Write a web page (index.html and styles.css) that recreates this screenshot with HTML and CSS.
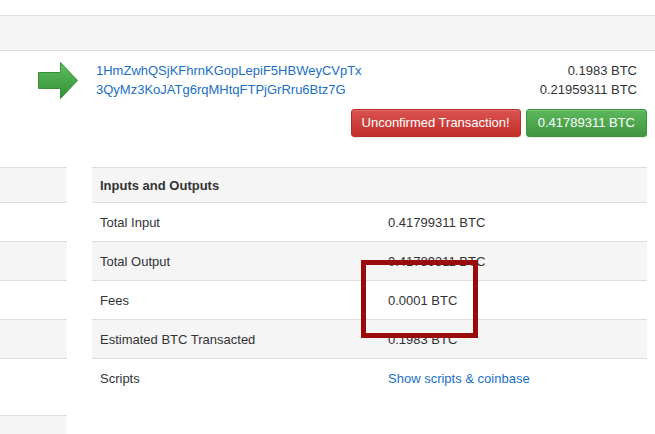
FILE: index.html
```html
<!DOCTYPE html>
<html>
<head>
<meta charset="utf-8">
<link rel="stylesheet" href="styles.css">
</head>
<body>
<div class="page">
  <div class="band"></div>

  <div class="tx">
    <div class="arrow">
      <svg width="40" height="37" viewBox="0 0 40 37">
        <defs>
          <linearGradient id="g" x1="0" y1="0" x2="0" y2="1">
            <stop offset="0" stop-color="#62bd62"/>
            <stop offset="1" stop-color="#2f9233"/>
          </linearGradient>
        </defs>
        <polygon points="0.5,10.5 22.5,10.5 22.5,0.5 39.5,18.5 22.5,36.5 22.5,26.5 0.5,26.5" fill="url(#g)" stroke="#3a8e3a" stroke-width="1"/>
      </svg>
    </div>
    <div class="addrs">
      <a class="link">1HmZwhQSjKFhrnKGopLepiF5HBWeyCVpTx</a>
      <a class="link">3QyMz3KoJATg6rqMHtqFTPjGrRru6Btz7G</a>
    </div>
    <div class="amounts">
      <span>0.1983 BTC</span>
      <span>0.21959311 BTC</span>
    </div>
  </div>

  <div class="buttons">
    <span class="btn btn-red">Unconfirmed Transaction!</span>
    <span class="btn btn-green">0.41789311 BTC</span>
  </div>

  <div class="lower">
    <div class="side">
      <div class="srow gray h35"></div>
      <div class="srow h39"></div>
      <div class="srow gray h39"></div>
      <div class="srow h39"></div>
      <div class="srow gray h39"></div>
      <div class="srow h57"></div>
      <div class="srow gray h40"></div>
    </div>
    <div class="table">
      <div class="trow head gray"><div class="cell"><b>Inputs and Outputs</b></div><div class="cell"></div></div>
      <div class="trow"><div class="cell">Total Input</div><div class="cell">0.41799311 BTC</div></div>
      <div class="trow gray"><div class="cell">Total Output</div><div class="cell">0.41789311 BTC</div></div>
      <div class="trow"><div class="cell">Fees</div><div class="cell">0.0001 BTC</div></div>
      <div class="trow gray"><div class="cell">Estimated BTC Transacted</div><div class="cell">0.1983 BTC</div></div>
      <div class="trow"><div class="cell">Scripts</div><div class="cell"><a class="link">Show scripts &amp; coinbase</a></div></div>
    </div>
  </div>

  <div class="highlight"></div>
</div>
</body>
</html>
```
FILE: styles.css
```css
html, body {
  margin: 0;
  padding: 0;
  background: #fff;
}
body {
  font-family: "Liberation Sans", Arial, sans-serif;
  font-size: 13px;
  color: #333;
  width: 655px;
  height: 434px;
  overflow: hidden;
}
.page {
  position: relative;
  padding-top: 15px;
  height: 419px;
}
.band {
  height: 34px;
  background: #f5f5f5;
  border-top: 1px solid #ddd;
  border-bottom: 1px solid #ddd;
}
.tx {
  display: flex;
  align-items: flex-start;
  margin-top: 10px;
  padding-right: 18px;
}
.arrow {
  width: 40px;
  margin-left: 38px;
  margin-top: 1px;
  height: 37px;
}
.arrow svg { display: block; }
.addrs {
  display: flex;
  flex-direction: column;
  margin-left: 18px;
  line-height: 19px;
  flex: 1;
}
.link {
  color: #1a6fc4;
  text-decoration: none;
}
.amounts {
  display: flex;
  flex-direction: column;
  align-items: flex-end;
  line-height: 19px;
}
.buttons {
  display: flex;
  justify-content: flex-end;
  gap: 5px;
  margin-top: 10px;
  padding-right: 8px;
}
.btn {
  display: inline-block;
  height: 26px;
  line-height: 26px;
  color: #fff;
  border-radius: 3px;
  padding: 0 10px;
  white-space: nowrap;
  box-shadow: inset 0 1px 0 rgba(255,255,255,0.15), 0 1px 1px rgba(0,0,0,0.08);
}
.btn-red {
  background: linear-gradient(#d9534f, #c12e2a);
  border: 1px solid #b92c28;
}
.btn-green {
  background: linear-gradient(#5cb85c, #419641);
  border: 1px solid #3e8f3e;
  padding: 0 11px;
}
.lower {
  display: flex;
  gap: 25px;
  margin-top: 30px;
}
.side {
  width: 67px;
  display: flex;
  flex-direction: column;
}
.srow {
  border-top: 1px solid #ddd;
  box-sizing: border-box;
}
.gray { background: #f5f5f5; }
.h35 { height: 35px; }
.h39 { height: 39px; }
.h57 { height: 57px; }
.h40 { height: 40px; }
.table {
  width: 555px;
  display: flex;
  flex-direction: column;
}
.trow {
  display: grid;
  grid-template-columns: 296px 1fr;
  border-top: 1px solid #ddd;
  height: 39px;
  box-sizing: border-box;
  align-items: center;
}
.trow.head { height: 35px; }
.cell {
  padding-left: 8px;
}
.trow .cell:last-child { padding-left: 0; }
.highlight {
  position: absolute;
  left: 361px;
  top: 260px;
  width: 117px;
  height: 78px;
  box-sizing: border-box;
  border: 5px solid #9b0a0a;
}
```
